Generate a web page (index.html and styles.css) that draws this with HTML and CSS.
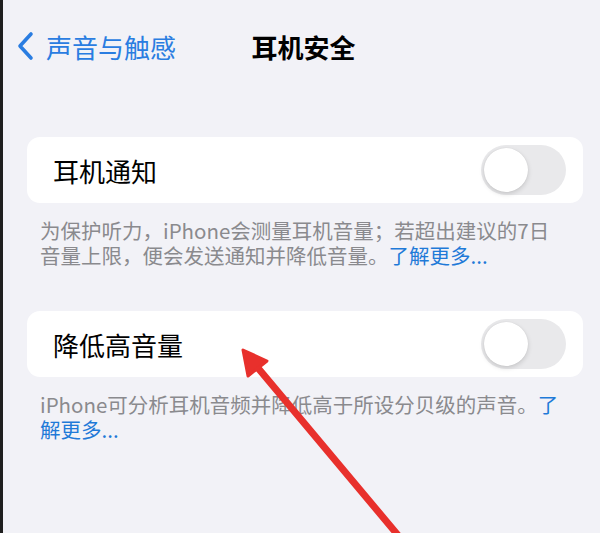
FILE: index.html
```html
<!DOCTYPE html>
<html>
<head>
    <meta charset="utf-8">
    <title>耳机安全</title>
    <link rel="stylesheet" href="styles.css">
</head>
<body>
    <div class="screen">
        <div class="nav">
            <div class="back">
                <svg class="chevron" width="18" height="30" viewBox="0 0 18 30">
                    <path d="M15 3 L4 15 L15 27" fill="none" stroke="#2a7de1" stroke-width="3.6" stroke-linecap="round" stroke-linejoin="round"/>
                </svg>
                <span>声音与触感</span>
            </div>
            <div class="title">耳机安全</div>
            <div class="spacer"></div>
        </div>

        <div class="group">
            <div class="card">
                <div class="card-label">耳机通知</div>
                <div class="toggle"><div class="knob"></div></div>
            </div>
            <div class="caption">为保护听力，iPhone会测量耳机音量；若超出建议的7日音量上限，便会发送通知并降低音量。<span class="link">了解更多...</span></div>
        </div>

        <div class="group second">
            <div class="card">
                <div class="card-label">降低高音量</div>
                <div class="toggle"><div class="knob"></div></div>
            </div>
            <div class="caption">iPhone可分析耳机音频并降低高于所设分贝级的声音。<span class="link">了解更多...</span></div>
        </div>

        <!-- red annotation arrow drawn over the screenshot -->
        <svg class="arrow" width="600" height="533" viewBox="0 0 600 533">
            <line x1="402" y1="540" x2="258" y2="368" stroke="#e8302c" stroke-width="7" stroke-linecap="round"/>
            <polygon points="243,350 267,361 248,376" fill="#e8302c" stroke="#e8302c" stroke-width="3" stroke-linejoin="round"/>
        </svg>
    </div>
</body>
</html>
```

FILE: styles.css
```css
body {
    margin: 0;
    background-color: #1f1f1f;
    font-family: "Noto Sans CJK SC", "Noto Sans", sans-serif;
}

.screen {
    position: relative;
    margin-left: 3px;
    height: 533px;
    overflow: hidden;
    background-color: #f2f2f7;
}

.nav {
    display: grid;
    grid-template-columns: 1fr auto 1fr;
    align-items: center;
    height: 92px;
}

.back {
    display: flex;
    align-items: center;
    gap: 12px;
    padding-left: 13px;
    color: #2a7de1;
    font-size: 26px;
}

.title {
    font-size: 26px;
    font-weight: bold;
    color: #000;
    padding-left: 4px;
}

.group {
    margin: 45px 17px 0 24px;
}

.group.second {
    margin-top: 44px;
}

.card {
    display: flex;
    align-items: center;
    justify-content: space-between;
    height: 66px;
    padding: 0 17px 0 26px;
    background: #fff;
    border-radius: 13px;
}

.card-label {
    font-size: 26px;
    color: #000;
}

.toggle {
    width: 85px;
    height: 50px;
    border-radius: 25px;
    background-color: #e9e9eb;
    padding: 3px;
    box-sizing: border-box;
}

.knob {
    width: 44px;
    height: 44px;
    border-radius: 50%;
    background: #fff;
    box-shadow: 0 2px 5px rgba(0, 0, 0, 0.15), 0 0 1px rgba(0, 0, 0, 0.12);
}

.caption {
    margin-top: 15px;
    padding: 0 20px 0 13px;
    font-size: 20.5px;
    line-height: 24.5px;
    color: #8a8a8e;
}

.link {
    color: #1f7ad8;
}

.arrow {
    position: absolute;
    left: -3px;
    top: 0;
}
```
